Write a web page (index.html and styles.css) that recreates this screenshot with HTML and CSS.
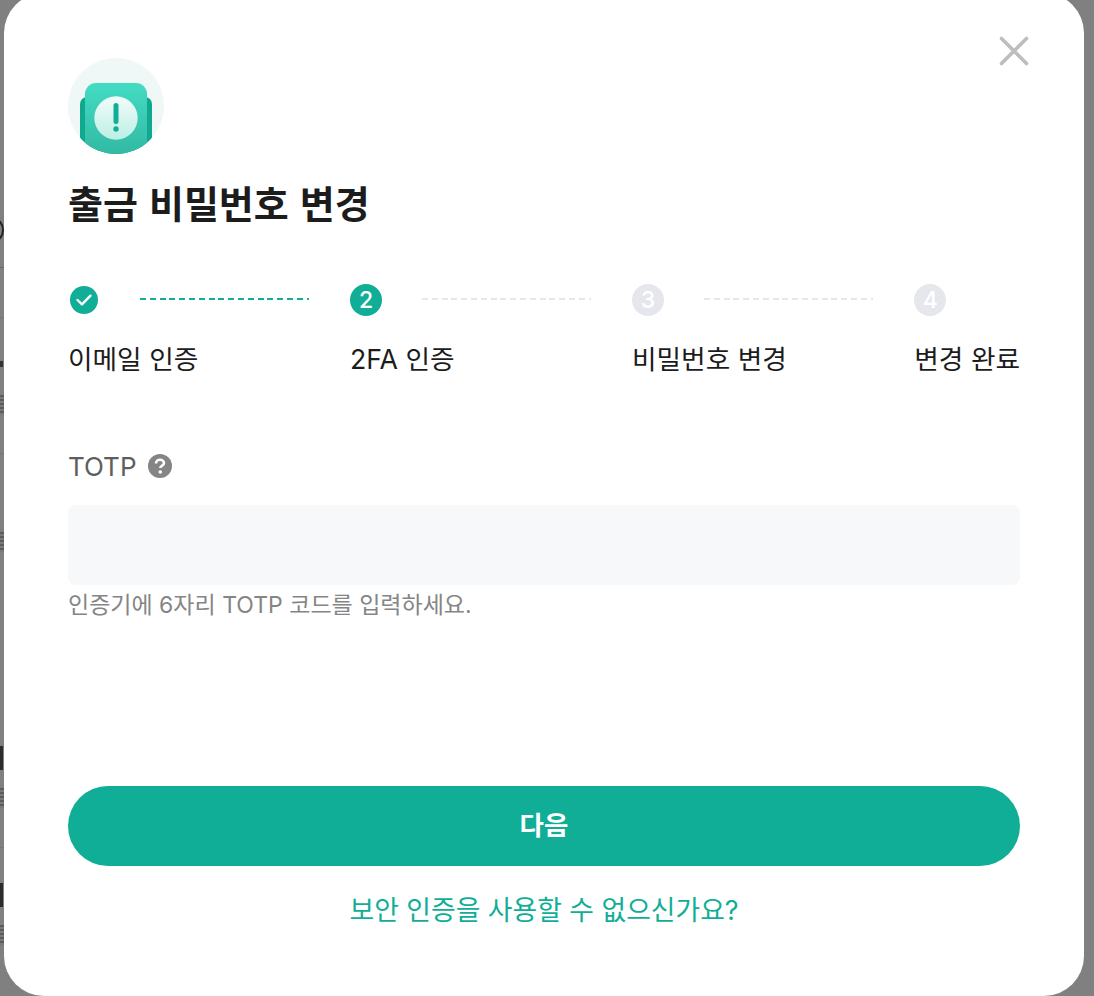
FILE: index.html
```html
<!DOCTYPE html>
<html lang="ko">
<head>
    <title>출금 비밀번호 변경</title>
    <link rel="stylesheet" href="styles.css">
</head>
<body>
    <!-- page behind the overlay, only a sliver shows -->
    <div class="behind">
        <span class="mark mark-ring"></span>
        <span class="mark mark-rule mark-r1"></span>
        <span class="mark mark-rule mark-r2"></span>
        <span class="mark mark-rule mark-r3"></span>
        <span class="mark mark-rule mark-r4"></span>
        <span class="mark mark-dots"></span>
        <span class="mark mark-text mark-t1"></span>
        <span class="mark mark-text mark-t2"></span>
        <span class="mark mark-bold mark-b1"></span>
        <span class="mark mark-text mark-t3"></span>
        <span class="mark mark-bold mark-b2"></span>
        <span class="mark mark-text mark-t4"></span>
    </div>

    <div class="modal">
        <button class="close" type="button" aria-label="닫기">
            <svg width="32" height="32" viewBox="0 0 32 32">
                <path d="M3.500 3.500 L28.500 28.500 M28.500 3.500 L3.500 28.500" stroke="#bdbdbd" stroke-width="3.600" stroke-linecap="round" fill="none"/>
            </svg>
        </button>

        <svg class="hero" width="96" height="96" viewBox="0 0 96 96">
            <defs>
                <linearGradient id="card" x1="0" y1="0" x2="0" y2="1">
                    <stop offset="0" stop-color="#43dcc3"/>
                    <stop offset="1" stop-color="#2fb39e"/>
                </linearGradient>
                <linearGradient id="face" x1="0" y1="0" x2="0" y2="1">
                    <stop offset="0" stop-color="#f3fcfa"/>
                    <stop offset="1" stop-color="#bcefe4"/>
                </linearGradient>
                <clipPath id="disc"><circle cx="48" cy="48" r="48"/></clipPath>
            </defs>
            <circle cx="48" cy="48" r="48" fill="#eff8f7"/>
            <g clip-path="url(#disc)">
                <rect x="12" y="39" width="72" height="70" rx="7" fill="#10a98f"/>
                <rect x="17" y="25" width="62" height="82" rx="11" fill="url(#card)"/>
            </g>
            <circle cx="48" cy="60" r="21.700" fill="url(#face)"/>
            <rect x="45.500" y="45" width="5" height="21" rx="2.500" fill="#10ae95"/>
            <circle cx="48" cy="71" r="2.700" fill="#10ae95"/>
        </svg>

        <h1 class="title">출금 비밀번호 변경</h1>

        <div class="steps">
            <div class="step">
                <div class="step-head">
                    <span class="dot dot-small">
                        <svg width="18" height="18" viewBox="0 0 18 18">
                            <path d="M2.500 9 L7 13.300 L15.500 4.700" stroke="#fff" stroke-width="2.400" stroke-linecap="round" stroke-linejoin="round" fill="none"/>
                        </svg>
                    </span>
                    <span class="dash dash-done"></span>
                </div>
                <span class="step-label">이메일 인증</span>
            </div>
            <div class="step">
                <div class="step-head">
                    <span class="dot">2</span>
                    <span class="dash"></span>
                </div>
                <span class="step-label">2FA 인증</span>
            </div>
            <div class="step">
                <div class="step-head">
                    <span class="dot dot-todo">3</span>
                    <span class="dash"></span>
                </div>
                <span class="step-label">비밀번호 변경</span>
            </div>
            <div class="step step-last">
                <div class="step-head">
                    <span class="dot dot-todo">4</span>
                </div>
                <span class="step-label">변경 완료</span>
            </div>
        </div>

        <div class="field-label">
            <label for="totp">TOTP</label>
            <svg width="24" height="24" viewBox="0 0 24 24">
                <circle cx="12" cy="12" r="12" fill="#858585"/>
                <path d="M8 9.500 C8 7 9.800 5.800 12 5.800 C14.300 5.800 16 7.200 16 9.200 C16 11.600 12.300 11.700 12.300 14" stroke="#fff" stroke-width="2.600" fill="none"/>
                <circle cx="12.300" cy="18" r="1.800" fill="#fff"/>
            </svg>
        </div>
        <input class="field-input" type="text" id="totp" name="totp">
        <p class="field-help">인증기에 6자리 TOTP 코드를 입력하세요.</p>

        <button class="next" type="button">다음</button>
        <a class="alt-link" href="#">보안 인증을 사용할 수 없으신가요?</a>
    </div>
</body>
</html>
```

FILE: styles.css
```css
html, body {
    height: 100%;
}

body {
    margin: 0;
    overflow: hidden;
    background-color: #808080;
    font-family: "Inter", "Noto Sans CJK KR", sans-serif;
    color: #1c1c1c;
}

.behind {
    position: absolute;
    left: 0;
    top: 0;
    width: 4px;
    height: 996px;
    overflow: hidden;
}

.mark {
    position: absolute;
    left: 0;
    width: 4px;
}

.mark-ring {
    left: -16px;
    top: 218px;
    width: 16px;
    height: 20px;
    border: 2px solid #222;
    border-radius: 50%;
}

.mark-rule {
    height: 1px;
    background-color: #767676;
}

.mark-r1 { top: 267px; background-color: #666; }
.mark-r2 { top: 317px; }
.mark-r3 { top: 453px; }
.mark-r4 { top: 847px; }

.mark-dots {
    top: 361px;
    height: 6px;
    width: 3px;
    background-color: #333;
}

.mark-text {
    height: 20px;
    background: repeating-linear-gradient(180deg, #5c5c5c 0 2px, #7a7a7a 2px 4px);
}

.mark-t1 { top: 395px; }
.mark-t2 { top: 532px; }
.mark-t3 { top: 788px; }
.mark-t4 { top: 925px; }

.mark-bold {
    height: 24px;
    width: 3px;
    background-color: #2c2c2c;
}

.mark-b1 { top: 746px; }
.mark-b2 { top: 883px; }

.modal {
    position: relative;
    box-sizing: border-box;
    width: 1080px;
    height: 1003px;
    margin: -7px 0 0 4px;
    padding: 65px 64px 0;
    background-color: #fff;
    border-radius: 40px;
    display: flex;
    flex-direction: column;
}

.close {
    position: absolute;
    top: 42px;
    right: 54px;
    width: 32px;
    height: 32px;
    padding: 0;
    border: none;
    background: none;
}

.close svg,
.hero {
    display: block;
}

.title {
    margin: 26px 0 0;
    font-size: 38px;
    line-height: 48px;
    font-weight: 700;
    word-spacing: 2px;
    color: #1c1c1c;
}

.steps {
    display: flex;
    margin-top: 56px;
}

.step {
    width: 282px;
    flex: none;
}

.step-last {
    width: auto;
    margin-left: auto;
}

.step-head {
    display: flex;
    align-items: center;
    height: 32px;
}

.dot {
    width: 32px;
    height: 32px;
    border-radius: 50%;
    flex: none;
    display: flex;
    align-items: center;
    justify-content: center;
    background-color: #10ae97;
    color: #fff;
    font-size: 23px;
    font-weight: 500;
    line-height: 1;
}

.dot-small {
    width: 28px;
    height: 28px;
    margin: 0 2px;
}

.dot-todo {
    background-color: #e6e7ec;
}

.dash {
    width: 169px;
    height: 2px;
    margin: -2px 0 0 40px;
    background: repeating-linear-gradient(90deg, #e6e7ec 0 6px, transparent 6px 9.800px);
}

.dash-done {
    background: repeating-linear-gradient(90deg, #10ae97 0 6px, transparent 6px 9.800px);
}

.step-label {
    display: block;
    margin-top: 25px;
    font-size: 26.700px;
    line-height: 36px;
}

.field-label {
    display: flex;
    align-items: center;
    gap: 11px;
    margin-top: 69px;
    height: 40px;
    color: #5e5e5e;
    font-size: 26px;
}

.field-input {
    box-sizing: border-box;
    display: block;
    width: 100%;
    height: 80px;
    margin-top: 19px;
    border: none;
    border-radius: 8px;
    background-color: #f7f8fa;
}

.field-help {
    margin: 2px 0 0;
    font-size: 23px;
    line-height: 36px;
    color: #858585;
}

.next {
    margin-top: 163px;
    height: 80px;
    flex: none;
    padding: 0 0 5px;
    border: none;
    border-radius: 40px;
    background-color: #10ae97;
    color: #fff;
    font-family: inherit;
    font-size: 26.500px;
    font-weight: 700;
}

.alt-link {
    margin-top: 24px;
    text-align: center;
    font-size: 26.800px;
    line-height: 40px;
    color: #10ae97;
    text-decoration: none;
}
```
